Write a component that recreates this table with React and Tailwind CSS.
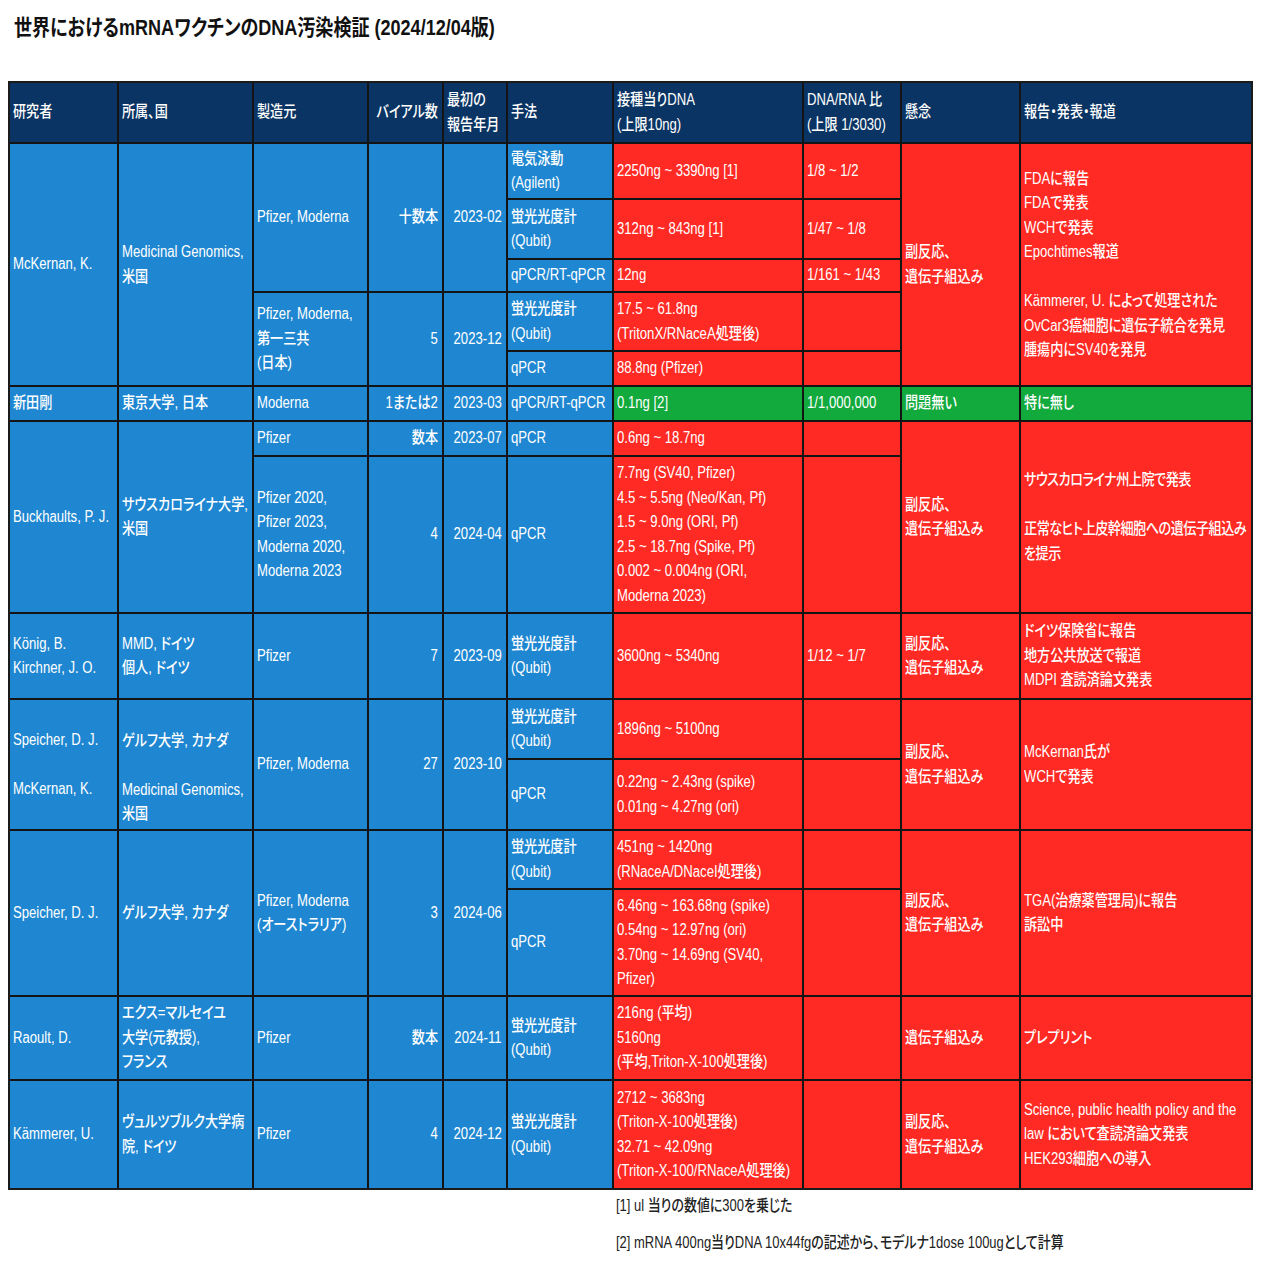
import React from 'react';
import clsx from 'clsx';

// 背景色
const HD = 'bg-[#0a3463]';
const BL = 'bg-[#1f87d1]';
const RD = 'bg-[#ff2a23]';
const GR = 'bg-[#12a93d]';

// 元資料の文字は縦長（横に詰めた）書体なので、横方向だけ縮める
const Lines = ({ items, right }) => (
  <div className={clsx('scale-x-[0.82]', right ? 'origin-right' : 'origin-left')}>
    {items.map((t, i) => (
      <div key={i} className="whitespace-nowrap">{t || '\u00a0'}</div>
    ))}
  </div>
);

const Cell = ({ bg, span = '', right = false, extra = '', lines }) => (
  <div
    className={clsx(
      'flex items-center min-w-0 px-[3px]',
      right && 'justify-end text-right pr-[4px]',
      bg,
      span,
      extra
    )}
  >
    {lines && <Lines items={lines} right={right} />}
  </div>
);

const HAZARD = ['副反応、', '遺伝子組込み'];
const QUBIT = ['蛍光光度計', '(Qubit)'];

const App = () => {
  return (
    <div className="min-h-screen bg-white pl-[8px] font-['Liberation_Sans','Noto_Sans_CJK_JP',sans-serif] [font-feature-settings:'palt']">
      {/* タイトル */}
      <div className="h-[81px] pt-[13px] pl-[6px]">
        <h1 className="inline-block origin-left scale-x-[0.82] whitespace-nowrap text-[22px] font-bold leading-[30px] text-[#111]">
          世界におけるmRNAワクチンのDNA汚染検証 (2024/12/04版)
        </h1>
      </div>

      {/* 表 */}
      <div className="inline-grid w-[1245px] border-2 border-[#1b1b1b] bg-[#141414] gap-[2px] grid-cols-[107px_133px_113px_73px_62px_104px_188px_96px_117px_230px] grid-rows-[59px_54px_58px_31px_57px_33px_33px_33px_155px_84px_58px_69px_57px_105px_82px_107px] text-[16px] leading-[24.5px] font-medium text-white">
        {/* ヘッダー */}
        <Cell bg={HD} lines={['研究者']} />
        <Cell bg={HD} lines={['所属、国']} />
        <Cell bg={HD} lines={['製造元']} />
        <Cell bg={HD} right lines={['バイアル数']} />
        <Cell bg={HD} lines={['最初の', '報告年月']} />
        <Cell bg={HD} lines={['手法']} />
        <Cell bg={HD} lines={['接種当りDNA', '(上限10ng)']} />
        <Cell bg={HD} lines={['DNA/RNA 比', '(上限 1/3030)']} />
        <Cell bg={HD} lines={['懸念']} />
        <Cell bg={HD} lines={['報告・発表・報道']} />

        {/* McKernan */}
        <Cell bg={BL} span="row-span-5" lines={['McKernan, K.']} />
        <Cell bg={BL} span="row-span-5" lines={['Medicinal Genomics,', '米国']} />
        <Cell bg={BL} span="row-span-3" lines={['Pfizer, Moderna']} />
        <Cell bg={BL} span="row-span-3" right lines={['十数本']} />
        <Cell bg={BL} span="row-span-3" right lines={['2023-02']} />
        <Cell bg={BL} lines={['電気泳動', '(Agilent)']} />
        <Cell bg={RD} lines={['2250ng ~ 3390ng [1]']} />
        <Cell bg={RD} lines={['1/8 ~ 1/2']} />
        <Cell bg={RD} span="row-span-5" lines={HAZARD} />
        <Cell
          bg={RD}
          span="row-span-5"
          lines={[
            'FDAに報告',
            'FDAで発表',
            'WCHで発表',
            'Epochtimes報道',
            '',
            'Kämmerer, U. によって処理された',
            'OvCar3癌細胞に遺伝子統合を発見',
            '腫瘍内にSV40を発見',
          ]}
        />
        <Cell bg={BL} lines={QUBIT} />
        <Cell bg={RD} lines={['312ng ~ 843ng [1]']} />
        <Cell bg={RD} lines={['1/47 ~ 1/8']} />
        <Cell bg={BL} lines={['qPCR/RT-qPCR']} />
        <Cell bg={RD} lines={['12ng']} />
        <Cell bg={RD} lines={['1/161 ~ 1/43']} />
        <Cell bg={BL} span="row-span-2" lines={['Pfizer, Moderna,', '第一三共', '(日本)']} />
        <Cell bg={BL} span="row-span-2" right lines={['5']} />
        <Cell bg={BL} span="row-span-2" right lines={['2023-12']} />
        <Cell bg={BL} lines={QUBIT} />
        <Cell bg={RD} lines={['17.5 ~ 61.8ng', '(TritonX/RNaceA処理後)']} />
        <Cell bg={RD} />
        <Cell bg={BL} lines={['qPCR']} />
        <Cell bg={RD} lines={['88.8ng (Pfizer)']} />
        <Cell bg={RD} />

        {/* 新田 */}
        <Cell bg={BL} lines={['新田剛']} />
        <Cell bg={BL} lines={['東京大学, 日本']} />
        <Cell bg={BL} lines={['Moderna']} />
        <Cell bg={BL} right lines={['1または2']} />
        <Cell bg={BL} right lines={['2023-03']} />
        <Cell bg={BL} lines={['qPCR/RT-qPCR']} />
        <Cell bg={GR} lines={['0.1ng [2]']} />
        <Cell bg={GR} lines={['1/1,000,000']} />
        <Cell bg={GR} lines={['問題無い']} />
        <Cell bg={GR} lines={['特に無し']} />

        {/* Buckhaults */}
        <Cell bg={BL} span="row-span-2" lines={['Buckhaults, P. J.']} />
        <Cell bg={BL} span="row-span-2" lines={['サウスカロライナ大学,', '米国']} />
        <Cell bg={BL} lines={['Pfizer']} />
        <Cell bg={BL} right lines={['数本']} />
        <Cell bg={BL} right lines={['2023-07']} />
        <Cell bg={BL} lines={['qPCR']} />
        <Cell bg={RD} lines={['0.6ng ~ 18.7ng']} />
        <Cell bg={RD} />
        <Cell bg={RD} span="row-span-2" lines={HAZARD} />
        <Cell
          bg={RD}
          span="row-span-2"
          extra="tracking-[-0.6px]"
          lines={['サウスカロライナ州上院で発表', '', '正常なヒト上皮幹細胞への遺伝子組込み', 'を提示']}
        />
        <Cell bg={BL} lines={['Pfizer 2020,', 'Pfizer 2023,', 'Moderna 2020,', 'Moderna 2023']} />
        <Cell bg={BL} right lines={['4']} />
        <Cell bg={BL} right lines={['2024-04']} />
        <Cell bg={BL} lines={['qPCR']} />
        <Cell
          bg={RD}
          lines={[
            '7.7ng (SV40, Pfizer)',
            '4.5 ~ 5.5ng (Neo/Kan, Pf)',
            '1.5 ~ 9.0ng (ORI, Pf)',
            '2.5 ~ 18.7ng (Spike, Pf)',
            '0.002 ~ 0.004ng (ORI,',
            'Moderna 2023)',
          ]}
        />
        <Cell bg={RD} />

        {/* König */}
        <Cell bg={BL} lines={['König, B.', 'Kirchner, J. O.']} />
        <Cell bg={BL} lines={['MMD, ドイツ', '個人, ドイツ']} />
        <Cell bg={BL} lines={['Pfizer']} />
        <Cell bg={BL} right lines={['7']} />
        <Cell bg={BL} right lines={['2023-09']} />
        <Cell bg={BL} lines={QUBIT} />
        <Cell bg={RD} lines={['3600ng ~ 5340ng']} />
        <Cell bg={RD} lines={['1/12 ~ 1/7']} />
        <Cell bg={RD} lines={HAZARD} />
        <Cell bg={RD} lines={['ドイツ保険省に報告', '地方公共放送で報道', 'MDPI 査読済論文発表']} />

        {/* Speicher 2023-10 */}
        <Cell bg={BL} span="row-span-2" lines={['Speicher, D. J.', '', 'McKernan, K.']} />
        <Cell
          bg={BL}
          span="row-span-2"
          extra="pt-[26px]"
          lines={['ゲルフ大学, カナダ', '', 'Medicinal Genomics,', '米国']}
        />
        <Cell bg={BL} span="row-span-2" lines={['Pfizer, Moderna']} />
        <Cell bg={BL} span="row-span-2" right lines={['27']} />
        <Cell bg={BL} span="row-span-2" right lines={['2023-10']} />
        <Cell bg={BL} lines={QUBIT} />
        <Cell bg={RD} lines={['1896ng ~ 5100ng']} />
        <Cell bg={RD} />
        <Cell bg={RD} span="row-span-2" lines={HAZARD} />
        <Cell bg={RD} span="row-span-2" lines={['McKernan氏が', 'WCHで発表']} />
        <Cell bg={BL} lines={['qPCR']} />
        <Cell bg={RD} lines={['0.22ng ~ 2.43ng (spike)', '0.01ng ~ 4.27ng (ori)']} />
        <Cell bg={RD} />

        {/* Speicher 2024-06 */}
        <Cell bg={BL} span="row-span-2" lines={['Speicher, D. J.']} />
        <Cell bg={BL} span="row-span-2" lines={['ゲルフ大学, カナダ']} />
        <Cell bg={BL} span="row-span-2" lines={['Pfizer, Moderna', '(オーストラリア)']} />
        <Cell bg={BL} span="row-span-2" right lines={['3']} />
        <Cell bg={BL} span="row-span-2" right lines={['2024-06']} />
        <Cell bg={BL} lines={QUBIT} />
        <Cell bg={RD} lines={['451ng ~ 1420ng', '(RNaceA/DNaceI処理後)']} />
        <Cell bg={RD} />
        <Cell bg={RD} span="row-span-2" lines={HAZARD} />
        <Cell bg={RD} span="row-span-2" lines={['TGA(治療薬管理局)に報告', '訴訟中']} />
        <Cell bg={BL} lines={['qPCR']} />
        <Cell
          bg={RD}
          lines={[
            '6.46ng ~ 163.68ng (spike)',
            '0.54ng ~ 12.97ng (ori)',
            '3.70ng ~ 14.69ng (SV40,',
            'Pfizer)',
          ]}
        />
        <Cell bg={RD} />

        {/* Raoult */}
        <Cell bg={BL} lines={['Raoult, D.']} />
        <Cell bg={BL} lines={['エクス=マルセイユ', '大学(元教授),', 'フランス']} />
        <Cell bg={BL} lines={['Pfizer']} />
        <Cell bg={BL} right lines={['数本']} />
        <Cell bg={BL} right lines={['2024-11']} />
        <Cell bg={BL} lines={QUBIT} />
        <Cell bg={RD} lines={['216ng (平均)', '5160ng', '(平均,Triton-X-100処理後)']} />
        <Cell bg={RD} />
        <Cell bg={RD} lines={['遺伝子組込み']} />
        <Cell bg={RD} lines={['プレプリント']} />

        {/* Kämmerer */}
        <Cell bg={BL} lines={['Kämmerer, U.']} />
        <Cell bg={BL} lines={['ヴュルツブルク大学病', '院, ドイツ']} />
        <Cell bg={BL} lines={['Pfizer']} />
        <Cell bg={BL} right lines={['4']} />
        <Cell bg={BL} right lines={['2024-12']} />
        <Cell bg={BL} lines={QUBIT} />
        <Cell
          bg={RD}
          lines={['2712 ~ 3683ng', '(Triton-X-100処理後)', '32.71 ~ 42.09ng', '(Triton-X-100/RNaceA処理後)']}
        />
        <Cell bg={RD} />
        <Cell bg={RD} lines={HAZARD} />
        <Cell
          bg={RD}
          lines={['Science, public health policy and the', 'law において査読済論文発表', 'HEK293細胞への導入']}
        />
      </div>

      {/* 注記 */}
      <div className="pl-[608px] pt-[4px] text-[16px] leading-[24.5px] text-[#222] font-medium flex flex-col gap-[12px]">
        <div className="origin-left scale-x-[0.81] whitespace-nowrap">[1] ul 当りの数値に300を乗じた</div>
        <div className="origin-left scale-x-[0.81] whitespace-nowrap">
          [2] mRNA 400ng当りDNA 10x44fgの記述から、モデルナ1dose 100ugとして計算
        </div>
      </div>
    </div>
  );
};

export default App;
